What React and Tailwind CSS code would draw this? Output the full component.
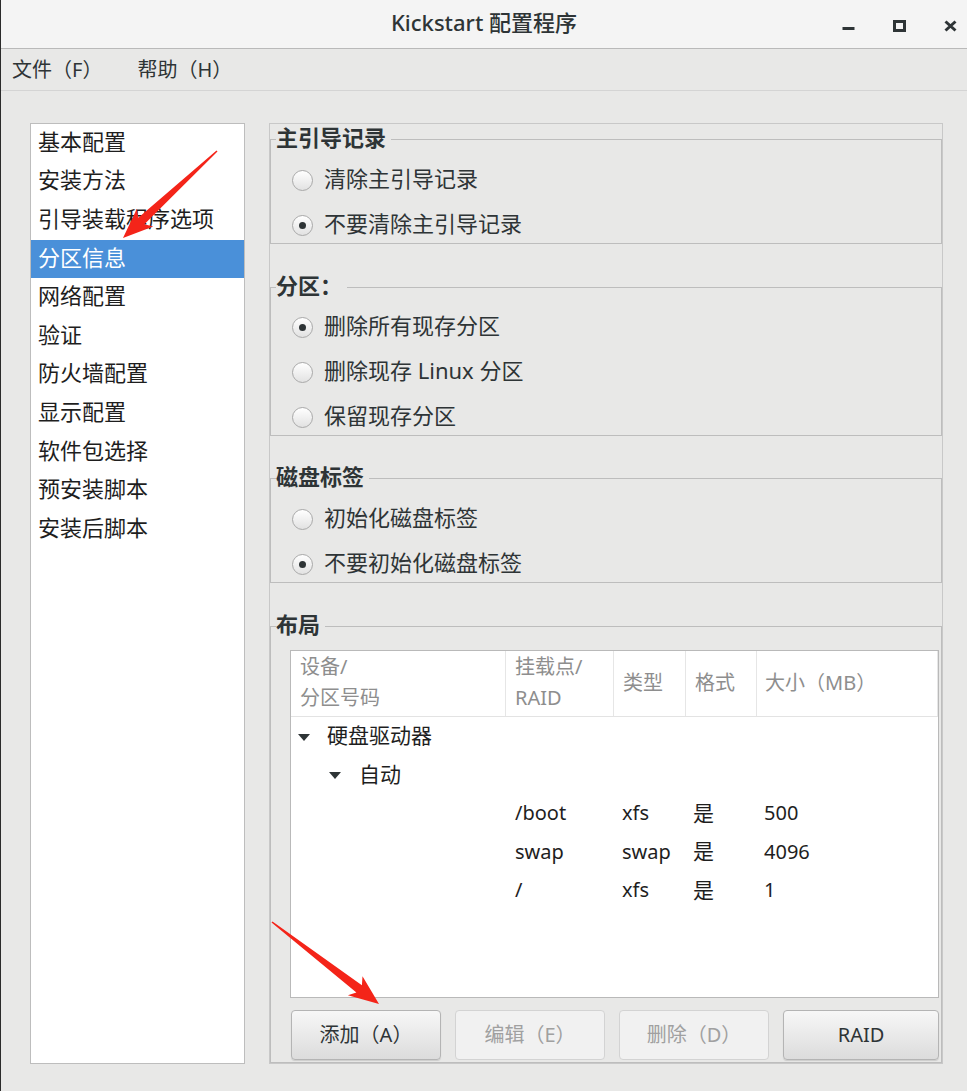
import React from 'react';

const navItems = [
  "基本配置",
  "安装方法",
  "引导装载程序选项",
  "分区信息",
  "网络配置",
  "验证",
  "防火墙配置",
  "显示配置",
  "软件包选择",
  "预安装脚本",
  "安装后脚本",
];

const partitions = [
  { mount: "/boot", type: "xfs", format: "是", size: "500" },
  { mount: "swap", type: "swap", format: "是", size: "4096" },
  { mount: "/", type: "xfs", format: "是", size: "1" },
];

// annotation arrow: thin tail, swept-back head
function arrowPoints(x1, y1, x2, y2, head = 30, headHalf = 12, shaft = 4.5) {
  const dx = x2 - x1;
  const dy = y2 - y1;
  const len = Math.hypot(dx, dy);
  const ux = dx / len;
  const uy = dy / len;
  const nx = -uy;
  const ny = ux;
  const bx = x2 - ux * head;
  const by = y2 - uy * head;
  const jx = bx + ux * 5;
  const jy = by + uy * 5;
  const pts = [
    [x1 + nx * 0.8, y1 + ny * 0.8],
    [jx + nx * shaft, jy + ny * shaft],
    [bx + nx * headHalf, by + ny * headHalf],
    [x2, y2],
    [bx - nx * headHalf, by - ny * headHalf],
    [jx - nx * shaft, jy - ny * shaft],
    [x1 - nx * 0.8, y1 - ny * 0.8],
  ];
  return pts.map((p) => p.map((v) => v.toFixed(1)).join(",")).join(" ");
}

const Radio = ({ checked, label }) => (
  <div className="flex h-[36px] items-center pl-[21px]">
    <span className="flex h-[21px] w-[21px] items-center justify-center rounded-full border border-[#a9a9a9] bg-gradient-to-b from-white to-[#e2e2e2]">
      {checked && <span className="h-[7px] w-[7px] rounded-full bg-[#2e3436]" />}
    </span>
    <span className="mb-[4px] ml-[11px] text-[22px] leading-none text-[#2e3436]">{label}</span>
  </div>
);

const Frame = ({ title, className, children }) => (
  <fieldset className={`border border-[#bdbdbd] ${className}`}>
    <legend className="ml-[5px] pb-[4px] pr-[5px] text-[22px] font-bold leading-[24px] text-[#2e3436]">{title}</legend>
    {children}
  </fieldset>
);

const Caret = () => (
  <svg width="12" height="7" viewBox="0 0 12 7" className="shrink-0">
    <polygon points="0,0 12,0 6,7" fill="#2e3436" />
  </svg>
);

const Button = ({ label, disabled, className }) => (
  <button
    className={`h-[50px] rounded-[4px] border text-[20px] ${className} ${
      disabled
        ? "border-[#d3d3d3] bg-[#f1f1f1] text-[#a0a0a0]"
        : "border-[#b4b4b4] bg-gradient-to-b from-[#f7f7f7] to-[#dcdcdc] text-[#2e3436] shadow-[0_1px_1px_rgba(0,0,0,0.12)]"
    }`}
  >
    {label}
  </button>
);

export default function App() {
  return (
    <div className="relative flex h-[1091px] w-[967px] flex-col overflow-hidden border-l border-[#2b2b2b] bg-[#e8e8e7] font-['Noto_Sans','Noto_Sans_CJK_SC',sans-serif] text-[#2e3436]">
      {/* title bar */}
      <div className="grid h-[49px] shrink-0 grid-cols-[1fr_auto_1fr] items-center border-b border-[#b9b9b9] bg-[#f4f4f4]">
        <div />
        <div className="pb-[3px] text-[22px] font-medium text-[#2e3436]">Kickstart 配置程序</div>
        <div className="flex items-start justify-end gap-[38px] pr-[10px] pt-[3px]">
          <svg width="13" height="12" viewBox="0 0 13 12">
            <rect x="0.5" y="7" width="12" height="3" fill="#2e3436" />
          </svg>
          <svg width="13" height="12" viewBox="0 0 13 12">
            <rect x="1.5" y="1.5" width="10" height="9" fill="none" stroke="#2e3436" strokeWidth="3" />
          </svg>
          <svg width="13" height="12" viewBox="0 0 13 12">
            <path d="M1.5 1.5 L11.5 10.5 M11.5 1.5 L1.5 10.5" stroke="#2e3436" strokeWidth="3" />
          </svg>
        </div>
      </div>

      {/* menu bar */}
      <div className="flex h-[42px] shrink-0 items-center gap-[35px] border-b border-[#d4d4d4] pl-[11px] text-[20px] text-[#2e3436]">
        <span>文件（F）</span>
        <span>帮助（H）</span>
      </div>

      {/* body */}
      <div className="flex flex-1 gap-[24px] pb-[27px] pl-[29px] pt-[32px]">
        <div className="w-[215px] border border-[#bdbdbd] bg-white">
          {navItems.map((item) => (
            <div
              key={item}
              className={`flex h-[38.6px] items-center pb-[4px] pl-[7px] text-[22px] ${
                item === "分区信息" ? "bg-[#4a90d9] text-white" : "text-[#1e1e1e]"
              }`}
            >
              {item}
            </div>
          ))}
        </div>

        <div className="w-[674px] border border-[#c8c8c8] pt-[1px]">
          <Frame title="主引导记录" className="">
            <div className="flex flex-col gap-[9px] pt-[9px]">
              <Radio label="清除主引导记录" />
              <Radio label="不要清除主引导记录" checked />
            </div>
          </Frame>

          <Frame title="分区：" className="mt-[29px]">
            <div className="flex flex-col gap-[9px] pt-[8px]">
              <Radio label="删除所有现存分区" checked />
              <Radio label="删除现存 Linux 分区" />
              <Radio label="保留现存分区" />
            </div>
          </Frame>

          <Frame title="磁盘标签" className="mt-[28px]">
            <div className="flex flex-col gap-[9px] pt-[9px]">
              <Radio label="初始化磁盘标签" />
              <Radio label="不要初始化磁盘标签" checked />
            </div>
          </Frame>

          <Frame title="布局" className="mt-[29px] pb-[2px]">
            <div className="ml-[19px] mr-[2px] mt-[10px] h-[348px] border border-[#b9b9b9] bg-white">
              <div className="flex h-[66px] border-b border-[#e3e3e3] text-[20px] leading-[31px] text-[#8e8e8e]">
                <div className="flex w-[215px] flex-col justify-center border-r border-[#e6e6e6] pb-[3px] pl-[9px]">
                  <span>设备/</span>
                  <span>分区号码</span>
                </div>
                <div className="flex w-[108px] flex-col justify-center border-r border-[#e6e6e6] pb-[3px] pl-[9px]">
                  <span>挂载点/</span>
                  <span>RAID</span>
                </div>
                <div className="flex w-[72px] items-center border-r border-[#e6e6e6] pb-[3px] pl-[9px]">类型</div>
                <div className="flex w-[71px] items-center border-r border-[#e6e6e6] pb-[3px] pl-[9px]">格式</div>
                <div className="flex flex-1 items-center border-r border-[#e6e6e6] pb-[3px] pl-[8px]">大小（MB）</div>
              </div>

              <div className="pt-[1px] text-[#1e1e1e]">
                <div className="flex h-[38.5px] items-center pl-[7px] text-[21px]">
                  <Caret />
                  <span className="mb-[3px] ml-[17px]">硬盘驱动器</span>
                </div>
                <div className="flex h-[38.5px] items-center pl-[38px] text-[21px]">
                  <Caret />
                  <span className="mb-[3px] ml-[18px]">自动</span>
                </div>
                {partitions.map((p) => (
                  <div key={p.mount} className="flex h-[38.5px] items-center pb-[2px] text-[20px]">
                    <div className="w-[215px]" />
                    <div className="w-[108px] pl-[9px]">{p.mount}</div>
                    <div className="w-[72px] pl-[8px]">{p.type}</div>
                    <div className="w-[71px] pl-[7px] text-[21px]">{p.format}</div>
                    <div className="flex-1 pl-[7px]">{p.size}</div>
                  </div>
                ))}
              </div>
            </div>

            <div className="ml-[20px] mr-[2px] mt-[12px] flex gap-[14px]">
              <Button label="添加（A）" className="w-[150px]" />
              <Button label="编辑（E）" className="w-[150px]" disabled />
              <Button label="删除（D）" className="w-[150px]" disabled />
              <Button label="RAID" className="flex-1" />
            </div>
          </Frame>
        </div>
      </div>

      {/* red annotation arrows */}
      <svg className="pointer-events-none absolute left-0 top-0" width="967" height="1091">
        <polygon points={arrowPoints(216, 151, 122, 238)} fill="#f42419" />
        <polygon points={arrowPoints(271, 922, 378, 1004)} fill="#f42419" />
      </svg>
    </div>
  );
}
